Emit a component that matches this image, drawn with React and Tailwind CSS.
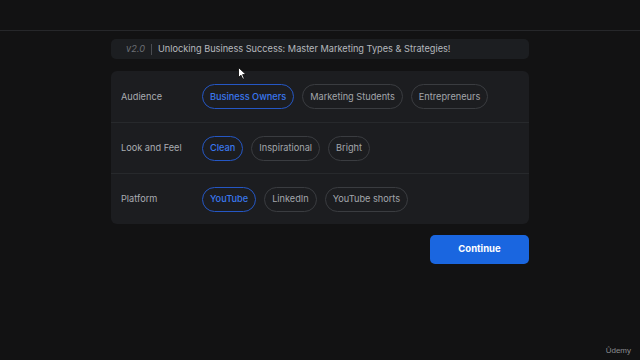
import React, { useState } from 'react';

const groups = [
    { label: 'Audience', options: ['Business Owners', 'Marketing Students', 'Entrepreneurs'] },
    { label: 'Look and Feel', options: ['Clean', 'Inspirational', 'Bright'] },
    { label: 'Platform', options: ['YouTube', 'LinkedIn', 'YouTube shorts'] },
];

const App = () => {
    const [selected, setSelected] = useState({
        Audience: 'Business Owners',
        'Look and Feel': 'Clean',
        Platform: 'YouTube',
    });

    return (
        <div
            className="relative w-[640px] h-[360px] overflow-hidden bg-[#121213] text-[#c9cbcf]"
            style={{ fontFamily: 'Inter, "Noto Sans", sans-serif' }}
        >
            <div className="h-[31px] border-b border-[#26272a]" />

            <div className="w-[418px] mx-auto mt-[8px] flex flex-col">
                {/* title bar */}
                <div className="h-[20px] rounded-[5px] bg-[#1c1e21] flex items-center pl-[15px] text-[9.2px]">
                    <span className="italic text-[#6c6f75]">v2.0</span>
                    <span className="mx-[6px] h-[11px] w-px bg-[#4a4c51]" />
                    <span className="text-[#b5b8bd]">Unlocking Business Success: Master Marketing Types &amp; Strategies!</span>
                </div>

                {/* options card */}
                <div className="mt-[12px] rounded-[6px] bg-[#1c1d20] flex flex-col">
                    {groups.map((g, i) => (
                        <div
                            key={g.label}
                            className={`h-[51px] flex items-center pl-[10px] ${i > 0 ? 'border-t border-[#27292c]' : ''}`}
                        >
                            <div className="w-[81px] text-[9.2px] text-[#a9acb1]">{g.label}</div>
                            <div className="flex gap-[8px]">
                                {g.options.map((o) => {
                                    const on = selected[g.label] === o;
                                    return (
                                        <button
                                            key={o}
                                            onClick={() => setSelected({ ...selected, [g.label]: o })}
                                            className={`h-[25px] px-[7px] rounded-full border text-[9.2px] leading-none ${
                                                on
                                                    ? 'border-[#2557c4] text-[#3a78ee] font-medium'
                                                    : 'border-[#3a3c40] text-[#a3a6ab]'
                                            }`}
                                        >
                                            {o}
                                        </button>
                                    );
                                })}
                            </div>
                        </div>
                    ))}
                </div>

                <div className="mt-[11px] flex justify-end">
                    <button className="w-[99px] h-[29px] rounded-[5px] bg-[#1a66e0] text-white text-[9.5px] font-bold">
                        Continue
                    </button>
                </div>
            </div>

            {/* mouse pointer */}
            <svg className="absolute left-[238px] top-[67px]" width="9" height="13" viewBox="0 0 9 13">
                <path d="M0.5 0.5 L0.5 10.5 L3 8.2 L4.8 12.2 L6.3 11.5 L4.6 7.6 L8 7.6 Z" fill="#fff" stroke="#000" strokeWidth="0.8" />
            </svg>

            <div className="absolute right-[9px] bottom-[3px] text-[8px] text-[#8a8c90]" style={{ fontFamily: '"Liberation Sans", sans-serif' }}>
                Ûdemy
            </div>
        </div>
    );
};

export default App;
